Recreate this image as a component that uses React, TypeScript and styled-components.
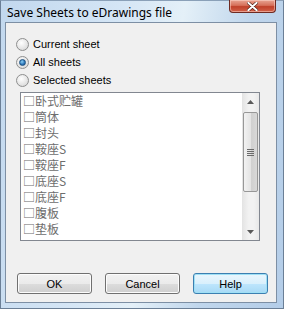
import styled, { createGlobalStyle } from "styled-components"

const GlobalStyle = createGlobalStyle`
  html, body {
    margin: 0;
    padding: 0;
    width: 284px;
    height: 309px;
    overflow: hidden;
  }
`

const sheets = ["卧式贮罐", "筒体", "封头", "鞍座S", "鞍座F", "底座S", "底座F", "腹板", "垫板"]

const Window = styled.div`
  width: 284px;
  height: 309px;
  box-sizing: border-box;
  display: flex;
  flex-direction: column;
  background: linear-gradient(100deg, #c2d8ee 0%, #d4e5f5 35%, #e4f0f8 55%, #c0d6ec 75%, #b4cde8 100%);
  border: 1px solid #6b7f96;
  border-top-color: #8aa0b8;
`

const TitleBar = styled.div`
  height: 21px;
  display: flex;
  justify-content: space-between;
  align-items: flex-start;
  padding-left: 6px;
`

const Title = styled.span`
  font-family: "Noto Sans", "Open Sans", sans-serif;
  font-size: 12px;
  line-height: 21px;
  color: #000;
  padding-top: 1px;
`

const CloseButton = styled.div`
  width: 45px;
  height: 12px;
  margin-right: 7px;
  margin-top: -1px;
  border: 1px solid #6e2a22;
  border-top: none;
  border-radius: 0 0 4px 4px;
  background: linear-gradient(#e8a493 0%, #d6705a 45%, #c0402a 55%, #d2624a 100%);
  box-shadow: inset 0 0 0 1px rgba(255, 220, 210, 0.5);
  display: flex;
  align-items: center;
  justify-content: center;
`

const Client = styled.div`
  flex: 1;
  margin: 0 6px 5px 4px;
  border: 1px solid #7d8fa4;
  background: #f0f0f0;
  display: flex;
  flex-direction: column;
  font-family: "Liberation Sans", Arial, sans-serif;
  font-size: 11px;
  color: #000;
`

const RadioGroup = styled.div`
  margin-top: 12px;
  padding-left: 10px;
  display: flex;
  flex-direction: column;
`

const RadioRow = styled.label`
  height: 18px;
  display: flex;
  align-items: center;
  gap: 4px;
`

const RadioCircle = styled.span<{ $checked?: boolean }>`
  width: 11px;
  height: 11px;
  border-radius: 50%;
  border: 1px solid #8e8f8f;
  background: radial-gradient(circle at 40% 35%, #ffffff 0%, #e6e6e6 55%, #cfcfcf 100%);
  display: flex;
  align-items: center;
  justify-content: center;
  &::after {
    content: "";
    display: ${(p) => (p.$checked ? "block" : "none")};
    width: 5px;
    height: 5px;
    border-radius: 50%;
    background: radial-gradient(circle at 40% 35%, #8ad0f5 0%, #2b74b8 60%, #1a4f8a 100%);
    border: 1px solid #1c5180;
  }
`

const ListBox = styled.div`
  margin: 3px 0 0 14px;
  width: 240px;
  height: 149px;
  box-sizing: border-box;
  border: 1px solid #828790;
  background: #fff;
  display: flex;
`

const Items = styled.div`
  flex: 1;
  padding-left: 2px;
  overflow: hidden;
`

const Item = styled.div`
  height: 16px;
  line-height: 16px;
  font-family: "Noto Sans CJK SC", "Liberation Sans", sans-serif;
  font-size: 12px;
  color: #6d6d6d;
  white-space: nowrap;
`

const ScrollBar = styled.div`
  width: 17px;
  display: flex;
  flex-direction: column;
  background: linear-gradient(90deg, #e3e3e3, #f2f2f2 40%, #f2f2f2 70%, #e8e8e8);
`

const Arrow = styled.div`
  height: 17px;
  display: flex;
  align-items: center;
  justify-content: center;
`

const Track = styled.div`
  flex: 1;
  padding: 2px 1px;
  display: flex;
  flex-direction: column;
`

const Thumb = styled.div`
  height: 80px;
  box-sizing: border-box;
  border: 1px solid #979797;
  border-radius: 2px;
  background: linear-gradient(90deg, #f2f2f2, #e4e4e4 50%, #cfcfcf 51%, #d8d8d8);
  display: flex;
  align-items: center;
  justify-content: center;
`

const ButtonRow = styled.div`
  margin-top: auto;
  margin-bottom: 8px;
  padding-left: 11px;
  display: flex;
  gap: 13px;
`

const Button = styled.div<{ $default?: boolean }>`
  width: 75px;
  height: 21px;
  box-sizing: border-box;
  border: 1px solid ${(p) => (p.$default ? "#3c7fb1" : "#707070")};
  border-radius: 3px;
  background: ${(p) =>
    p.$default
      ? "linear-gradient(#eaf6fd 0%, #d9f0fc 50%, #bee6fd 51%, #a7d9f5 100%)"
      : "linear-gradient(#f2f2f2 0%, #ebebeb 50%, #dddddd 51%, #cfcfcf 100%)"};
  box-shadow: inset 0 0 0 1px ${(p) => (p.$default ? "#9fe0f5" : "#fcfcfc")};
  display: flex;
  align-items: center;
  justify-content: center;
  font-size: 11px;
`

export default function App() {
  return (
    <>
      <GlobalStyle />
      <Window>
        <TitleBar>
          <Title>Save Sheets to eDrawings file</Title>
          <CloseButton>
            <svg width="11" height="9" viewBox="0 0 11 9">
              <path d="M1 0.5 L10 8.5 M10 0.5 L1 8.5" stroke="#4a1a12" strokeWidth="3.2" strokeLinecap="round" />
              <path d="M1.3 0.8 L9.7 8.2 M9.7 0.8 L1.3 8.2" stroke="#fff" strokeWidth="2" strokeLinecap="round" />
            </svg>
          </CloseButton>
        </TitleBar>
        <Client>
          <RadioGroup>
            <RadioRow><RadioCircle />Current sheet</RadioRow>
            <RadioRow><RadioCircle $checked />All sheets</RadioRow>
            <RadioRow><RadioCircle />Selected sheets</RadioRow>
          </RadioGroup>
          <ListBox>
            <Items>
              {sheets.map((s) => (
                <Item key={s}>□{s}</Item>
              ))}
            </Items>
            <ScrollBar>
              <Arrow>
                <svg width="7" height="4" viewBox="0 0 7 4"><path d="M0 4 L3.5 0 L7 4 Z" fill="#5a5a5a" /></svg>
              </Arrow>
              <Track>
                <Thumb>
                  <svg width="7" height="7" viewBox="0 0 7 7">
                    <path d="M0 0.5 H7 M0 2.5 H7 M0 4.5 H7 M0 6.5 H7" stroke="#6a6a6a" strokeWidth="1" />
                  </svg>
                </Thumb>
              </Track>
              <Arrow>
                <svg width="7" height="4" viewBox="0 0 7 4"><path d="M0 0 L3.5 4 L7 0 Z" fill="#5a5a5a" /></svg>
              </Arrow>
            </ScrollBar>
          </ListBox>
          <ButtonRow>
            <Button>OK</Button>
            <Button>Cancel</Button>
            <Button $default>Help</Button>
          </ButtonRow>
        </Client>
      </Window>
    </>
  )
}
